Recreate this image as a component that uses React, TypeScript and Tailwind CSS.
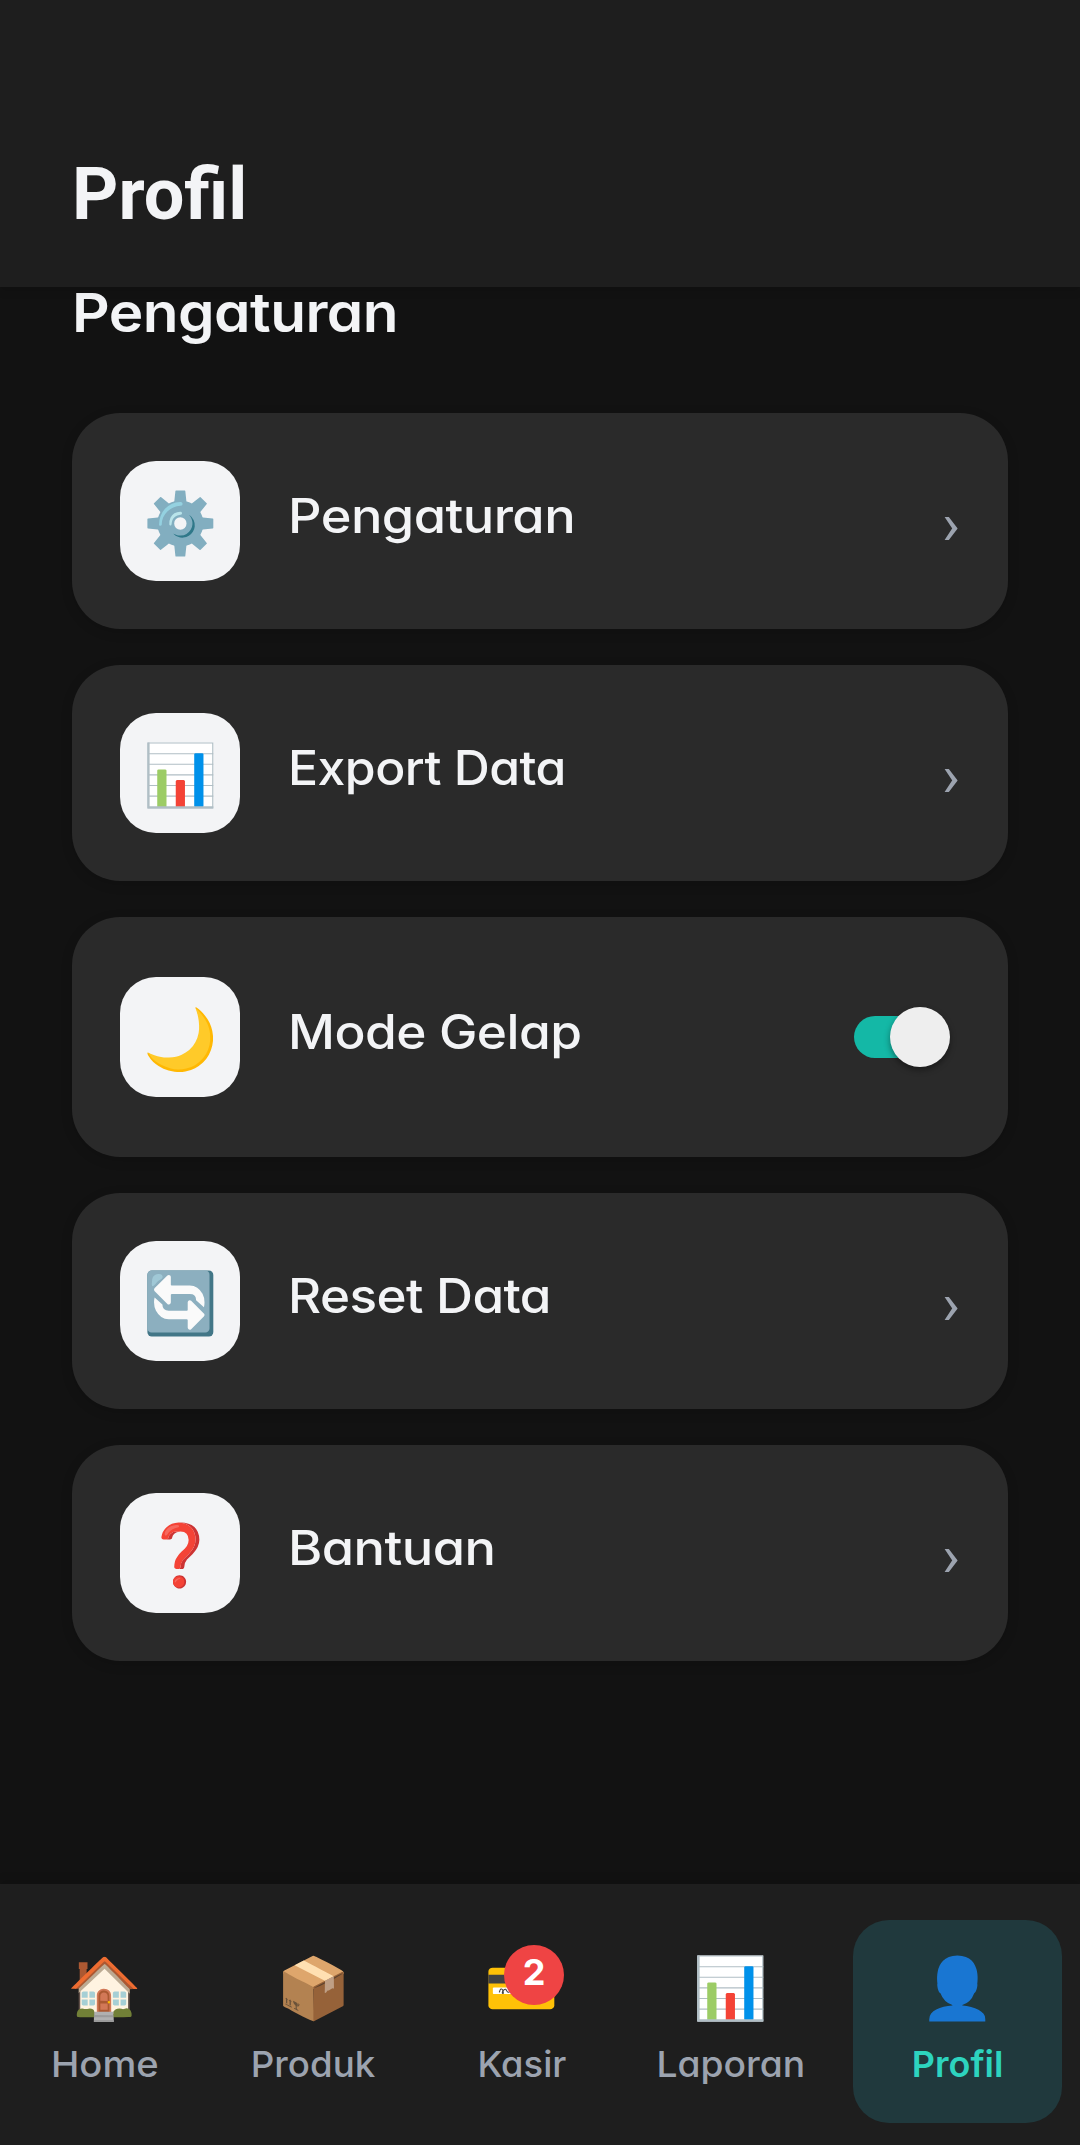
type MenuItem = {
  icon: string;
  label: string;
  stretch: string;
  toggle?: boolean;
};

type Tab = {
  icon: string;
  label: string;
  stretch: string;
  badge?: number;
  active?: boolean;
};

const menu: MenuItem[] = [
  { icon: "⚙️", label: "Pengaturan", stretch: "scale-x-[1.09]" },
  { icon: "📊", label: "Export Data", stretch: "scale-x-[1.04]" },
  { icon: "🌙", label: "Mode Gelap", stretch: "scale-x-[1.071]", toggle: true },
  { icon: "🔄", label: "Reset Data", stretch: "scale-x-[1.066]" },
  { icon: "❓", label: "Bantuan", stretch: "scale-x-[1.09]" },
];

const tabs: Tab[] = [
  { icon: "🏠", label: "Home", stretch: "scale-x-[1.06]" },
  { icon: "📦", label: "Produk", stretch: "scale-x-[1.02]" },
  { icon: "💳", label: "Kasir", stretch: "scale-x-[1.01]", badge: 2 },
  { icon: "📊", label: "Laporan", stretch: "scale-x-[1.035]" },
  { icon: "👤", label: "Profil", stretch: "scale-x-100", active: true },
];

function Switch() {
  return (
    <div className="relative mr-4 h-[42px] w-[90px] rounded-full bg-[#14b8a6]">
      <div className="absolute -top-[9px] right-[-6px] size-[60px] rounded-full bg-[#eeeeee] shadow-[0_3px_6px_rgba(0,0,0,0.4)]" />
    </div>
  );
}

function MenuCard({ item }: { item: MenuItem }) {
  return (
    <div
      className={`flex items-center rounded-[48px] bg-[#2a2a2a] px-12 shadow-[0_3px_12px_rgba(0,0,0,0.15)] ${
        item.toggle ? "h-[240px]" : "h-[216px]"
      }`}
    >
      <div className="flex size-[120px] items-center justify-center rounded-[36px] bg-[#f3f4f6] pt-0.5 text-[60px] leading-none">
        <span>{item.icon}</span>
      </div>
      <div className="ml-12 flex-1 pb-2.5">
        <span
          className={`inline-block origin-left text-[48px] leading-[60px] font-medium tracking-[-0.5px] text-[#f3f4f6] ${item.stretch}`}
        >
          {item.label}
        </span>
      </div>
      {item.toggle ? (
        <Switch />
      ) : (
        <span className="pt-1.5 font-['Roboto',sans-serif] text-[60px] leading-none text-[#9ca3af]">›</span>
      )}
    </div>
  );
}

function TabButton({ tab }: { tab: Tab }) {
  return (
    <div
      className={`flex h-[203px] w-[208.8px] flex-col items-center rounded-[36px] pt-[33px] ${
        tab.active ? "mx-[18px] bg-[#20393d]" : ""
      }`}
    >
      <div className="relative flex h-[67px] items-center justify-center text-[60px] leading-none">
        <span>{tab.icon}</span>
        {tab.badge && (
          <div className="absolute -top-2 left-1/2 -ml-[18px] flex size-[60px] items-center justify-center rounded-full bg-[#ef4444] pb-1.5 text-[36px] leading-none font-bold text-white">
            {tab.badge}
          </div>
        )}
      </div>
      <span
        className={`mt-[26px] text-[36px] leading-9 ${
          tab.active ? "font-semibold text-[#2dd4bf]" : "font-medium text-[#9ca3af]"
        } ${tab.stretch}`}
      >
        {tab.label}
      </span>
    </div>
  );
}

export default function App() {
  return (
    <div className="flex h-[2145px] w-[1080px] flex-col overflow-hidden bg-[#121212] font-['Inter',sans-serif] [font-feature-settings:'cv11']">
      <header className="z-10 flex h-[287px] shrink-0 items-end bg-[#1e1e1e] px-[72px] pb-14 shadow-[0_3px_9px_rgba(0,0,0,0.15)]">
        <h1 className="font-['Roboto',sans-serif] text-[72px] leading-[72px] font-bold text-[#f3f4f6]">Profil</h1>
      </header>

      <main className="flex-1 px-[72px] pt-px">
        <h2 className="mb-[75px] inline-block origin-left scale-x-[1.083] text-[54px] leading-[50px] font-semibold tracking-[-0.5px] text-[#f3f4f6]">
          Pengaturan
        </h2>
        <div className="flex flex-col gap-9">
          {menu.map((item) => (
            <MenuCard key={item.label} item={item} />
          ))}
        </div>
      </main>

      <nav className="flex h-[261px] shrink-0 items-start bg-[#1e1e1e] pt-9 shadow-[0_-3px_9px_rgba(0,0,0,0.15)]">
        {tabs.map((tab) => (
          <TabButton key={tab.label} tab={tab} />
        ))}
      </nav>
    </div>
  );
}
